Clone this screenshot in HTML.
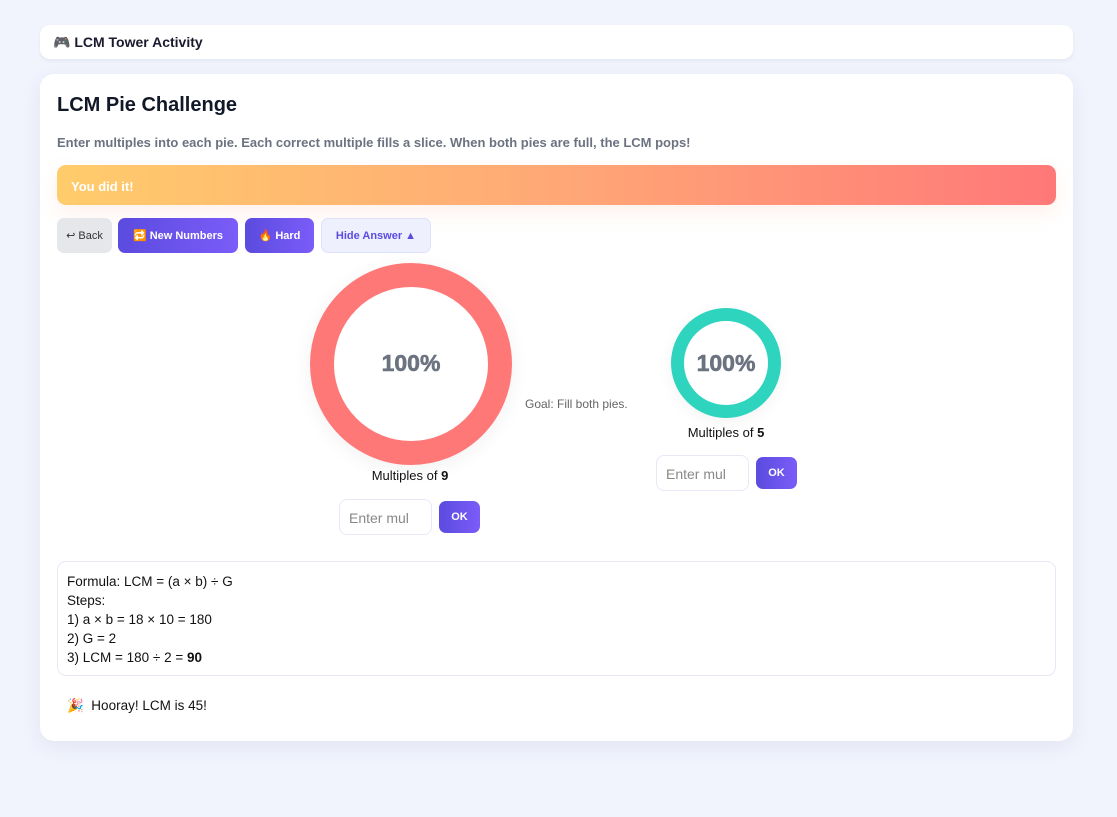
<!DOCTYPE html>
<html><head><meta charset="utf-8"><style>
body{margin:0;width:1117px;height:817px;background:#f1f4fd;font-family:"Liberation Sans","Noto Sans CJK SC",sans-serif;position:relative;overflow:hidden}
.a{position:absolute}
.top{left:40px;top:25px;width:1033px;height:34px;background:#fff;border-radius:10px;box-shadow:0 2px 4px rgba(0,0,0,.06)}
.card{left:40px;top:74px;width:1033px;height:667px;background:#fff;border-radius:14px;box-shadow:0 6px 20px rgba(60,70,120,.08)}
.btn{position:absolute;top:218px;height:35px;border-radius:7px;font-size:11px;font-weight:bold;display:flex;align-items:center;justify-content:center;box-sizing:border-box}
.pur{background:linear-gradient(90deg,#5b4bdf,#7b5cf8);color:#fff}
.inp{position:absolute;height:36px;border:1px solid #e6e9f5;border-radius:8px;box-sizing:border-box;color:#888;font-size:14px;padding:10px 9px}
.ok{position:absolute;width:41px;height:32px;border-radius:7px;font-size:11px;font-weight:bold;color:#fff;background:linear-gradient(90deg,#5b4bdf,#7b5cf8);display:flex;align-items:center;justify-content:center}
.pct{font-size:23px;font-weight:bold;color:#6b7280;text-align:center;-webkit-text-stroke:0.6px #6b7280}
</style></head><body>
<div class="a top"></div>
<div class="a" style="left:53px;top:34px;font-size:14px;font-weight:bold;color:#1a1a2e">🎮 LCM Tower Activity</div>
<div class="a card"></div>
<div class="a" style="left:57px;top:94px;font-size:20px;font-weight:bold;color:#111827">LCM Pie Challenge</div>
<div class="a" style="left:57px;top:135px;font-size:13px;font-weight:bold;color:#6b7280">Enter multiples into each pie. Each correct multiple fills a slice. When both pies are full, the LCM pops!</div>
<div class="a" style="left:57px;top:165px;width:999px;height:40px;border-radius:9px;background:linear-gradient(90deg,#ffcc6b,#ffa876 50%,#ff7878);box-shadow:0 8px 20px rgba(255,160,120,.15)"></div>
<div class="a" style="left:71px;top:179px;font-size:13px;font-weight:bold;color:#fff">You did it!</div>
<div class="btn" style="left:57px;width:55px;background:#e5e7eb;color:#333;font-weight:normal">↩ Back</div>
<div class="btn pur" style="left:118px;width:120px">🔁 New Numbers</div>
<div class="btn pur" style="left:245px;width:69px">🔥 Hard</div>
<div class="btn" style="left:321px;width:110px;background:#eef0fe;border:1px solid #dfe2fb;color:#5b4bdf">Hide Answer ▲</div>

<div class="a" style="left:310px;top:263px;width:154px;height:154px;border:24px solid #ff7878;border-radius:50%;background:#fff;box-shadow:0 4px 20px rgba(0,0,0,.06)"></div>
<div class="a pct" style="left:310px;top:350px;width:202px">100%</div>
<div class="a" style="left:310px;top:468px;width:200px;text-align:center;font-size:13px;color:#111">Multiples of <b>9</b></div>
<div class="inp" style="left:339px;top:499px;width:93px">Enter mul</div>
<div class="ok" style="left:439px;top:501px">OK</div>

<div class="a" style="left:525px;top:397px;font-size:12px;color:#666">Goal: Fill both pies.</div>

<div class="a" style="left:671px;top:308px;width:84px;height:84px;border:13px solid #2fd4bf;border-radius:50%;background:#fff;box-shadow:0 4px 16px rgba(0,0,0,.05)"></div>
<div class="a pct" style="left:671px;top:350px;width:110px">100%</div>
<div class="a" style="left:671px;top:425px;width:110px;text-align:center;font-size:13px;color:#111">Multiples of <b>5</b></div>
<div class="inp" style="left:656px;top:455px;width:93px">Enter mul</div>
<div class="ok" style="left:756px;top:457px">OK</div>

<div class="a" style="left:57px;top:561px;width:997px;height:113px;border:1px solid #e6e9f5;border-radius:9px"></div>
<div class="a" style="left:67px;top:572px;font-size:13.5px;line-height:19px;color:#111">Formula: LCM = (a × b) ÷ G<br>Steps:<br>1) a × b = 18 × 10 = 180<br>2) G = 2<br>3) LCM = 180 ÷ 2 = <b>90</b></div>
<div class="a" style="left:67px;top:698px;font-size:13.5px;color:#111">🎉&nbsp; Hooray! LCM is 45!</div>
</body></html>
